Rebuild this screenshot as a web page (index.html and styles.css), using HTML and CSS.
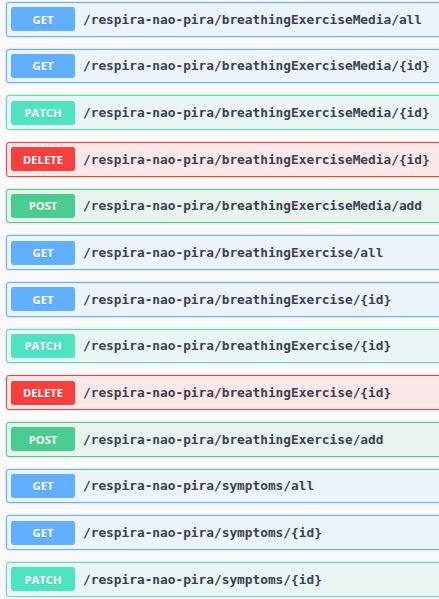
FILE: index.html
```html
<!DOCTYPE html>
<html>
<head>
<meta charset="utf-8">
<link rel="stylesheet" href="styles.css">
</head>
<body>
<div class="ops">
  <div class="op get"><span class="method">GET</span><span class="path">/respira-nao-pira/breathingExerciseMedia/all</span></div>
  <div class="op get"><span class="method">GET</span><span class="path">/respira-nao-pira/breathingExerciseMedia/{id}</span></div>
  <div class="op patch"><span class="method">PATCH</span><span class="path">/respira-nao-pira/breathingExerciseMedia/{id}</span></div>
  <div class="op delete"><span class="method">DELETE</span><span class="path">/respira-nao-pira/breathingExerciseMedia/{id}</span></div>
  <div class="op post"><span class="method">POST</span><span class="path">/respira-nao-pira/breathingExerciseMedia/add</span></div>
  <div class="op get"><span class="method">GET</span><span class="path">/respira-nao-pira/breathingExercise/all</span></div>
  <div class="op get"><span class="method">GET</span><span class="path">/respira-nao-pira/breathingExercise/{id}</span></div>
  <div class="op patch"><span class="method">PATCH</span><span class="path">/respira-nao-pira/breathingExercise/{id}</span></div>
  <div class="op delete"><span class="method">DELETE</span><span class="path">/respira-nao-pira/breathingExercise/{id}</span></div>
  <div class="op post"><span class="method">POST</span><span class="path">/respira-nao-pira/breathingExercise/add</span></div>
  <div class="op get"><span class="method">GET</span><span class="path">/respira-nao-pira/symptoms/all</span></div>
  <div class="op get"><span class="method">GET</span><span class="path">/respira-nao-pira/symptoms/{id}</span></div>
  <div class="op patch"><span class="method">PATCH</span><span class="path">/respira-nao-pira/symptoms/{id}</span></div>
</div>
</body>
</html>
```
FILE: styles.css
```css
html {
  overflow: hidden;
  background: #fafafa;
}
body {
  margin: 0;
  padding: 2px 0 0 6px;
  font-family: "Open Sans", "Noto Sans", sans-serif;
}
.ops {
  display: flex;
  flex-direction: column;
  gap: 12px;
  width: 470px;
}
.op {
  display: flex;
  align-items: center;
  height: 34.67px;
  box-sizing: border-box;
  padding: 0 4px;
  border: 1px solid;
  border-radius: 3px;
  box-shadow: 0 0 2.4px rgba(0, 0, 0, 0.19);
}
.method {
  flex: none;
  width: 64px;
  height: 24px;
  display: flex;
  align-items: center;
  justify-content: center;
  border-radius: 2.4px;
  color: #fff;
  font-size: 11.2px;
  font-weight: 700;
  text-shadow: 0 1px 0 rgba(0, 0, 0, 0.1);
}
.path {
  padding: 0 8px;
  font-family: "DejaVu Sans Mono", monospace;
  font-weight: 700;
  font-size: 12.8px;
  color: #3b4151;
  white-space: nowrap;
}
.get { border-color: #61affe; background: #ebf3fb; }
.get .method { background: #61affe; }
.patch { border-color: #50e3c2; background: #e9f6f3; }
.patch .method { background: #50e3c2; }
.delete { border-color: #f93e3e; background: #fae7e7; }
.delete .method { background: #f93e3e; }
.post { border-color: #49cc90; background: #e8f3ee; }
.post .method { background: #49cc90; }
```
